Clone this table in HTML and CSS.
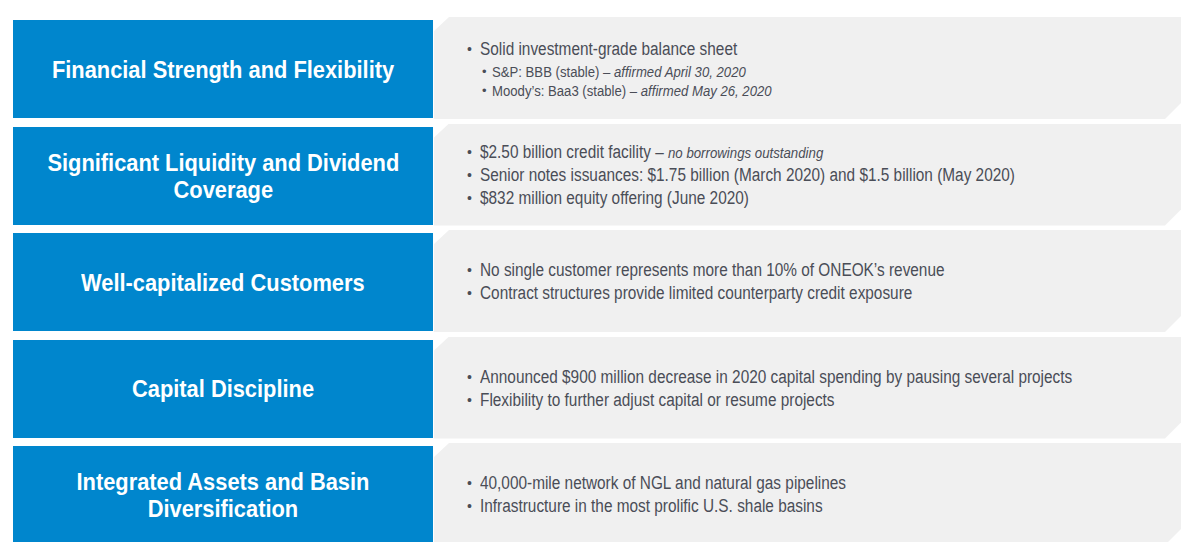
FILE: index.html
```html
<!DOCTYPE html>
<html lang="en">
<head>
<meta charset="utf-8">
<title>Financial strength</title>
<link rel="stylesheet" href="styles.css">
</head>
<body>
<main class="slide">
  <section class="row">
    <div class="title"><span class="label">Financial Strength and Flexibility</span></div>
    <div class="detail">
      <div class="points">
        <p class="item"><span class="dot">•</span><span class="txt">Solid investment-grade balance sheet</span></p>
        <p class="item sub sub-first"><span class="dot">•</span><span class="txt">S&amp;P: BBB (stable) – <em>affirmed April 30, 2020</em></span></p>
        <p class="item sub"><span class="dot">•</span><span class="txt">Moody’s: Baa3 (stable) – <em>affirmed May 26, 2020</em></span></p>
      </div>
    </div>
  </section>
  <section class="row">
    <div class="title"><span class="label">Significant Liquidity and Dividend<br>Coverage</span></div>
    <div class="detail">
      <div class="points">
        <p class="item"><span class="dot">•</span><span class="txt">$2.50 billion credit facility – <em class="note">no borrowings outstanding</em></span></p>
        <p class="item"><span class="dot">•</span><span class="txt">Senior notes issuances: $1.75 billion (March 2020) and $1.5 billion (May 2020)</span></p>
        <p class="item"><span class="dot">•</span><span class="txt">$832 million equity offering (June 2020)</span></p>
      </div>
    </div>
  </section>
  <section class="row">
    <div class="title"><span class="label">Well-capitalized Customers</span></div>
    <div class="detail">
      <div class="points">
        <p class="item"><span class="dot">•</span><span class="txt">No single customer represents more than 10% of ONEOK’s revenue</span></p>
        <p class="item"><span class="dot">•</span><span class="txt">Contract structures provide limited counterparty credit exposure</span></p>
      </div>
    </div>
  </section>
  <section class="row">
    <div class="title"><span class="label">Capital Discipline</span></div>
    <div class="detail">
      <div class="points">
        <p class="item"><span class="dot">•</span><span class="txt">Announced $900 million decrease in 2020 capital spending by pausing several projects</span></p>
        <p class="item"><span class="dot">•</span><span class="txt">Flexibility to further adjust capital or resume projects</span></p>
      </div>
    </div>
  </section>
  <section class="row">
    <div class="title"><span class="label">Integrated Assets and Basin<br>Diversification</span></div>
    <div class="detail">
      <div class="points">
        <p class="item"><span class="dot">•</span><span class="txt">40,000-mile network of NGL and natural gas pipelines</span></p>
        <p class="item"><span class="dot">•</span><span class="txt">Infrastructure in the most prolific U.S. shale basins</span></p>
      </div>
    </div>
  </section>
</main>
</body>
</html>
```
FILE: styles.css
```css
html, body {
  margin: 0;
  padding: 0;
  background: #ffffff;
}
body {
  width: 1203px;
  height: 542px;
  overflow: hidden;
  font-family: "Liberation Sans", Arial, sans-serif;
}
.slide {
  display: flex;
  flex-direction: column;
  gap: 4.5px;
  padding: 17px 0 0 13px;
}
.row {
  display: grid;
  grid-template-columns: 420px 747px;
  column-gap: 1px;
  height: 102px;
  flex: none;
}
.title {
  margin: 3px 0 1px;
  background: #0086cd;
  color: #ffffff;
  font-weight: bold;
  font-size: 24px;
  line-height: 27px;
  text-align: center;
  display: flex;
  align-items: center;
  justify-content: center;
}
.label {
  display: inline-block;
  white-space: nowrap;
  transform: scaleX(0.91);
  transform-origin: center center;
}
.detail {
  background: #f0f0f0;
  clip-path: polygon(15px 0, 100% 0, 100% calc(100% - 16px), calc(100% - 16px) 100%, 0 100%, 0 14px);
  display: flex;
  align-items: center;
  padding: 2px 0 0 33px;
  color: #4a4d57;
}
.points {
  display: flex;
  flex-direction: column;
}
.item {
  margin: 0;
  display: flex;
  font-size: 18px;
  line-height: 23px;
  white-space: nowrap;
}
.dot {
  width: 13px;
  flex: none;
  font-size: 14px;
}
.txt {
  display: inline-block;
  transform: scaleX(0.854);
  transform-origin: left center;
}
.sub {
  font-size: 15.4px;
  line-height: 19px;
  margin-left: 15px;
}
.sub .dot {
  width: 10px;
  font-size: 13px;
}
.sub-first {
  margin-top: 1px;
}
.note {
  font-size: 15.5px;
}
em {
  font-style: italic;
}
```
